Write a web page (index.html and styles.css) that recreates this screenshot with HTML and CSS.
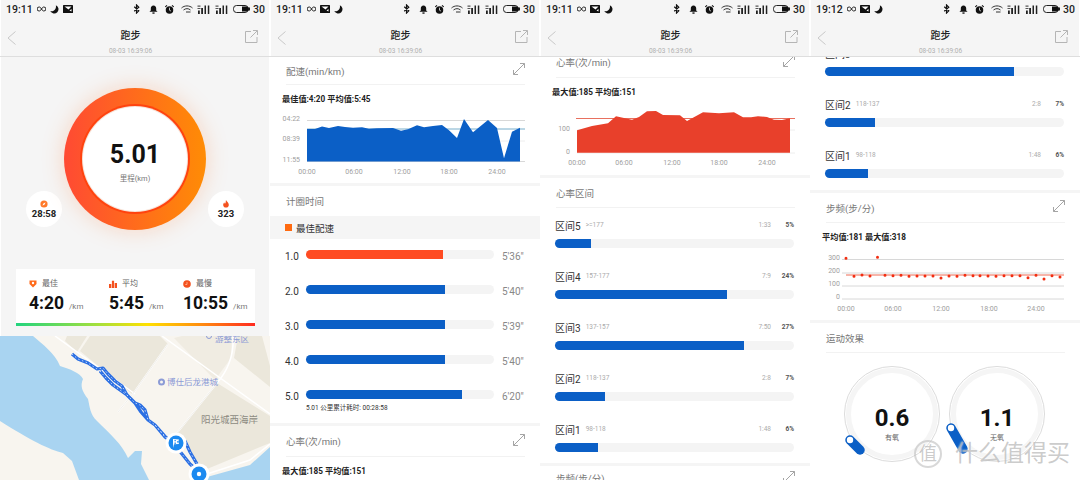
FILE: index.html
```html
<!DOCTYPE html>
<html lang="en">
<head>
<meta charset="UTF-8">
<meta name="viewport" content="width=device-width, initial-scale=1.0">
<link rel="stylesheet" href="styles.css">
<title>跑步</title>
</head>
<body>
<svg class="icon-defs" aria-hidden="true">
    <symbol id="i-inf" viewBox="0 0 10 6"><path d="M5 3C4 1 3 .8 2.3 .8a2.2 2.2 0 0 0 0 4.4C3 5.2 4 5 5 3s2-2.2 2.7-2.2a2.2 2.2 0 0 1 0 4.4C7 5.2 6 5 5 3z" fill="none" stroke="#222" stroke-width="1.1"/></symbol>
    <symbol id="i-moon" viewBox="0 0 10 10"><path d="M6.5 .3A4.8 4.8 0 1 1 .3 6.8C3.8 7.8 7.5 4.5 6.5 .3z" fill="#111"/></symbol>
    <symbol id="i-mail" viewBox="0 0 10 8"><rect width="10" height="8" rx=".6" fill="#111"/><path d="M1.5 1.5h7L5.5 4.5z" fill="#fff"/><path d="M6.5 5.500l2-1.500v2.500z" fill="#fff"/></symbol>
    <symbol id="i-bt" viewBox="0 0 7 11"><path d="M1 3l5 4.5L3.500 10V1L6 3.500 1 8" fill="none" stroke="#111" stroke-width="1.3"/></symbol>
    <symbol id="i-bell" viewBox="0 0 10 10"><path d="M5 .5c2 0 3 1.5 3 3.3V6l1.5 1.5h-9L2 6V3.800C2 2 3 .5 5 .5z" fill="#111"/><rect x="3.8" y="8.2" width="2.4" height="1.5" fill="#111"/></symbol>
    <symbol id="i-alarm" viewBox="0 0 10 10"><circle cx="5" cy="5.5" r="4.2" fill="#111"/><path d="M5 3v2.800l1.700 1" fill="none" stroke="#fff" stroke-width=".8"/><path d="M.3 2.200L2.200 .4M9.700 2.200L7.800 .4" stroke="#111" stroke-width="1.2"/></symbol>
    <symbol id="i-wifi" viewBox="0 0 12 8"><path d="M.5 3C3.500 .2 8.500 .2 11.500 3M2.500 5C4.500 3.200 7.500 3.200 9.500 5" fill="none" stroke="#333" stroke-width="1"/><path d="M5 7h4.500" stroke="#333" stroke-width="1"/></symbol>
    <symbol id="i-signal" viewBox="0 0 13 9"><path d="M.5 .5h3v1.200h-3zM.5 3h3v1h-3z" fill="#555"/><path d="M1 9V5.500h1.800V9zM4.200 9V3h1.800v6zM7.500 9V.5h1.500V9zM10.800 9V.5h1.500V9z" fill="#222"/></symbol>
    <symbol id="i-battery" viewBox="0 0 17 8"><rect x=".5" y=".5" width="14.5" height="7" rx="3" fill="none" stroke="#222"/><path d="M9 1.500h4.500a2 2 0 0 1 0 5H9z" fill="#111"/><rect x="15.5" y="2.5" width="1.5" height="3" fill="#222"/></symbol>
    <symbol id="i-back" viewBox="0 0 9 14"><path d="M8.500 .5L1 7l7.500 6.500" fill="none" stroke="#c8c8c8" stroke-width="1"/></symbol>
    <symbol id="i-share" viewBox="0 0 13 13"><path d="M6 1.500H.5v11h11.500V7" fill="none" stroke="#b5b5b5" stroke-width="1"/><path d="M5.500 7.500L12.300 .7M8 .5h4.500V5" fill="none" stroke="#b5b5b5" stroke-width="1"/></symbol>
    <symbol id="i-expand" viewBox="0 0 12 12"><path d="M.5 11.500L11.500 .5M7 .5h4.500V5M.5 7v4.500H5" fill="none" stroke="#a5a5a5" stroke-width="1"/></symbol>
</svg>

<div class="shots">

    <!-- overview -->
    <div class="screen">
        <div class="status-bar">
            <span class="status-time">19:11</span>
            <svg class="st-inf"><use href="#i-inf"/></svg>
            <svg class="st-moon"><use href="#i-moon"/></svg>
            <svg class="st-mail"><use href="#i-mail"/></svg>
            <div class="status-right">
                <svg class="st-bt"><use href="#i-bt"/></svg>
                <svg class="st-bell"><use href="#i-bell"/></svg>
                <svg class="st-alarm"><use href="#i-alarm"/></svg>
                <svg class="st-wifi"><use href="#i-wifi"/></svg>
                <svg class="st-signal"><use href="#i-signal"/></svg>
                <svg class="st-signal"><use href="#i-signal"/></svg>
                <svg class="st-battery"><use href="#i-battery"/></svg>
                <span class="status-level">30</span>
            </div>
        </div>
        <div class="nav-bar">
            <svg class="nav-back"><use href="#i-back"/></svg>
            <div class="nav-title">
                <div class="nav-name">跑步</div>
                <div class="nav-date">08-03 16:39:06</div>
            </div>
            <svg class="nav-share"><use href="#i-share"/></svg>
        </div>
        <div class="hero">
            <div class="hero-row">
                <div class="badge">
                    <svg class="badge-icon" viewBox="0 0 10 10"><circle cx="5" cy="5" r="4.5" fill="#ff7a2a"/><path d="M3 7l1.500-3L7 3 5.500 6z" fill="#fff"/></svg>
                    <span class="badge-value">28:58</span>
                </div>
                <div class="ring">
                    <div class="ring-core">
                        <div class="ring-value">5.01</div>
                        <div class="ring-label">里程(km)</div>
                    </div>
                </div>
                <div class="badge">
                    <svg class="badge-icon" viewBox="0 0 10 10"><path d="M5 0c.5 2 3.500 3 3.500 6a3.500 3.500 0 0 1-7 0c0-1.500.8-2.500 1.500-3 0 1 .5 1.500 1 1.500C5 3.500 4.500 1.500 5 0z" fill="#f4511e"/></svg>
                    <span class="badge-value">323</span>
                </div>
            </div>
            <div class="pace-card">
                <div class="pace-cols">
                    <div class="pace-col pace-best">
                        <div class="pace-label"><svg class="pace-icon" viewBox="0 0 8 8"><path d="M.5 .5h7v3.500L4 7.500.5 4z" fill="#ff6a1a"/><circle cx="4" cy="3" r="1.2" fill="#fff"/></svg>最佳</div>
                        <div class="pace-value">4:20<span class="pace-unit">/km</span></div>
                    </div>
                    <div class="pace-col pace-avg">
                        <div class="pace-label"><svg class="pace-icon" viewBox="0 0 8 8"><path d="M0 8V4h2.300v4zM2.900 8V.8h2.200V8zM5.700 8V3H8v5z" fill="#f4511e"/></svg>平均</div>
                        <div class="pace-value">5:45<span class="pace-unit">/km</span></div>
                    </div>
                    <div class="pace-col">
                        <div class="pace-label"><svg class="pace-icon" viewBox="0 0 8 8"><circle cx="4" cy="4" r="3.8" fill="#f4511e"/><path d="M4 2v2.500H2.300" fill="none" stroke="#ffc9a8" stroke-width=".7"/></svg>最慢</div>
                        <div class="pace-value">10:55<span class="pace-unit">/km</span></div>
                    </div>
                </div>
                <div class="pace-scale"></div>
            </div>
        </div>
        <svg class="map" viewBox="0 336 270 144">
            <rect x="0" y="336" width="270" height="144" fill="#f8f5ef"/>
            <path d="M67 336H87L77 352 65 341zM90 336H160L168 344 135 391 132 394 80 351z" fill="#ebe7db"/>
            <path d="M174 338L182 336H232L231 358 215 380z" fill="#f0ece2"/>
            <path d="M238 336H262L270 366V387L234 358z" fill="#ebe7db"/>
            <path d="M177 433L217 383 270 416V443L207 469 198 466 185 443z" fill="#ebe7db"/>
            <path d="M0 336H33C42 344 55 353 60 366 70 369 80 373 83 379 80 386 82 391 88 399 90 408 90 414 97 421 110 434 122 444 128 458L135 451H142L141 464 149 480H79L72 461 63 453C50 450 30 440 0 421z" fill="#a9d4f1"/>
            <path d="M206 480L207 477 250 465 270 447V480z" fill="#a9d4f1"/>
            <path d="M55 336L135 394M162 336L270 414M168 344L135 391 118 412" fill="none" stroke="#fff" stroke-width="1.5"/>
            <path d="M233 336C234 352 230 368 217 383L177 433M207 474L250 460 270 444" fill="none" stroke="#fff" stroke-width="1.5"/>
            <path d="M168 344L135 391 118 412M217 383L177 433" fill="none" stroke="#e6e3db" stroke-width=".6"/>
            <path class="route" d="M72 354L78 359 88 363 97 369 103 368 108 374 115 381 122 386 127 395 135 403 140 405 145 410 148 420 155 425 165 437 172 441M100 371L106 378 113 385 120 390 127 395M135 403L141 412 148 420M155 425L163 434 170 442M178 449L190 464 197 470M185 441L190 452 197 464"/>
            <path class="route-dash" d="M72 354L78 359 88 363 97 369 103 368 108 374 115 381 122 386 127 395 135 403 140 405 145 410 148 420 155 425 165 437 172 441M100 371L106 378 113 385 120 390 127 395M155 425L163 434 170 442M178 449L190 464 197 470M185 441L190 452 197 464"/>
            <circle cx="209" cy="336" r="2.5" fill="none" stroke="#8c9bd6"/>
            <text class="map-poi" x="215" y="342">游整东区</text>
            <circle cx="161.5" cy="382" r="3.5" fill="#8c9bd6"/>
            <circle cx="161.5" cy="382" r="1.5" fill="#f8f5ef"/>
            <text class="map-poi" x="167" y="385">博仕后龙港城</text>
            <text class="map-area" x="201" y="423">阳光城西海岸</text>
            <circle cx="176" cy="443" r="10.5" fill="#fff"/>
            <circle cx="176" cy="443" r="7.5" fill="#1c8af0"/>
            <path d="M173 448V439l6 .5-.8 2.200 .8 2.300-5 .2" fill="#fff"/>
            <path d="M174.500 440h1.300v1.300h-1.300zM177 441.300h1.200v1.300H177zM174.500 442.600h1.300v1.300h-1.300z" fill="#1c8af0"/>
            <circle cx="199" cy="474" r="10.5" fill="#fff"/>
            <circle cx="199" cy="474" r="7.5" fill="#1c8af0"/>
            <circle cx="199" cy="474" r="2.2" fill="#fff"/>
        </svg>
    </div>

    <!-- pace and laps -->
    <div class="screen">
        <div class="status-bar">
            <span class="status-time">19:11</span>
            <svg class="st-inf"><use href="#i-inf"/></svg>
            <svg class="st-mail"><use href="#i-mail"/></svg>
            <svg class="st-moon"><use href="#i-moon"/></svg>
            <div class="status-right">
                <svg class="st-bt"><use href="#i-bt"/></svg>
                <svg class="st-bell"><use href="#i-bell"/></svg>
                <svg class="st-alarm"><use href="#i-alarm"/></svg>
                <svg class="st-wifi"><use href="#i-wifi"/></svg>
                <svg class="st-signal"><use href="#i-signal"/></svg>
                <svg class="st-signal"><use href="#i-signal"/></svg>
                <svg class="st-battery"><use href="#i-battery"/></svg>
                <span class="status-level">30</span>
            </div>
        </div>
        <div class="nav-bar">
            <svg class="nav-back"><use href="#i-back"/></svg>
            <div class="nav-title">
                <div class="nav-name">跑步</div>
                <div class="nav-date">08-03 16:39:06</div>
            </div>
            <svg class="nav-share"><use href="#i-share"/></svg>
        </div>
        <div class="scroll">
            <div class="section-head section-head-short">
                <span>配速(min/km)</span>
                <svg class="expand"><use href="#i-expand"/></svg>
            </div>
            <div class="stat-line">最佳值:4:20 平均值:5:45</div>
            <svg class="chart chart-pace" viewBox="0 110 270 72">
                <path class="grid-line" d="M37 119.5H255M37 160.5H255"/>
                <path class="grid-soft" d="M37 140H255"/>
                <path d="M37 128H255" stroke="#79aecb" stroke-width="1" fill="none"/>
                <path d="M37 128H45L52 125.5 59 127 68 125 75 126 83 126.7 92 126.3 99 127.7 107 127.3 123 127 131 129.7 138 128.3 147 124.3 154 126.3 163 125 172 124 179 129.3 187 137 194 118 203 131.3 218 119 227 127 234 157.3 242 130.7 250 126.7V160.5H37z" fill="#0b5fc6"/>
                <text class="axis-y" x="30" y="119.5">04:22</text>
                <text class="axis-y" x="30" y="140">08:39</text>
                <text class="axis-y" x="30" y="161">11:55</text>
                <text class="axis-x" x="37" y="172.5">00:00</text>
                <text class="axis-x" x="84" y="172.5">06:00</text>
                <text class="axis-x" x="132" y="172.5">12:00</text>
                <text class="axis-x" x="179" y="172.5">18:00</text>
                <text class="axis-x" x="227" y="172.5">24:00</text>
            </svg>
            <div class="divider"></div>
            <div class="section-plain">计圈时间</div>
            <div class="lap-band"><span class="lap-mark"></span>最佳配速</div>
            <div class="laps">
                <div class="lap-row">
                    <span class="lap-no">1.0</span>
                    <div class="track"><div class="fill fill-best" style="width: 73%"></div></div>
                    <span class="lap-time">5'36"</span>
                </div>
                <div class="lap-row">
                    <span class="lap-no">2.0</span>
                    <div class="track"><div class="fill" style="width: 74%"></div></div>
                    <span class="lap-time">5'40"</span>
                </div>
                <div class="lap-row">
                    <span class="lap-no">3.0</span>
                    <div class="track"><div class="fill" style="width: 74%"></div></div>
                    <span class="lap-time">5'39"</span>
                </div>
                <div class="lap-row">
                    <span class="lap-no">4.0</span>
                    <div class="track"><div class="fill" style="width: 74%"></div></div>
                    <span class="lap-time">5'40"</span>
                </div>
                <div class="lap-row">
                    <span class="lap-no">5.0</span>
                    <div class="track"><div class="fill" style="width: 83%"></div></div>
                    <span class="lap-time">6'20"</span>
                </div>
            </div>
            <div class="lap-note">5.01 公里累计耗时: 00:28:58</div>
            <div class="divider"></div>
            <div class="section-head">
                <span>心率(次/min)</span>
                <svg class="expand"><use href="#i-expand"/></svg>
            </div>
            <div class="stat-line">最大值:185 平均值:151</div>
        </div>
    </div>

    <!-- heart rate -->
    <div class="screen">
        <div class="status-bar">
            <span class="status-time">19:11</span>
            <svg class="st-inf"><use href="#i-inf"/></svg>
            <svg class="st-mail"><use href="#i-mail"/></svg>
            <svg class="st-moon"><use href="#i-moon"/></svg>
            <div class="status-right">
                <svg class="st-bt"><use href="#i-bt"/></svg>
                <svg class="st-bell"><use href="#i-bell"/></svg>
                <svg class="st-alarm"><use href="#i-alarm"/></svg>
                <svg class="st-wifi"><use href="#i-wifi"/></svg>
                <svg class="st-signal"><use href="#i-signal"/></svg>
                <svg class="st-signal"><use href="#i-signal"/></svg>
                <svg class="st-battery"><use href="#i-battery"/></svg>
                <span class="status-level">30</span>
            </div>
        </div>
        <div class="nav-bar">
            <svg class="nav-back"><use href="#i-back"/></svg>
            <div class="nav-title">
                <div class="nav-name">跑步</div>
                <div class="nav-date">08-03 16:39:06</div>
            </div>
            <svg class="nav-share"><use href="#i-share"/></svg>
        </div>
        <div class="scroll">
            <div class="section-head section-head-cut">
                <span>心率(次/min)</span>
                <svg class="expand"><use href="#i-expand"/></svg>
            </div>
            <div class="stat-line">最大值:185 平均值:151</div>
            <svg class="chart chart-heart" viewBox="0 104 270 71">
                <path class="grid-soft" d="M37 130H255M37 153H255"/>
                <path d="M36 118.5H255" stroke="#e8705f" stroke-width="1" fill="none"/>
                <path d="M37 130.3L52 126 68 123.3 76 116.3 92 119.7 99 117 107 111.3 116 111 123 115 140 115.3 147 121 163 112.3 179 113.3 194 112.3 203 117.3 211 117.3 218 116.3 227 117 234 119.7 242 120 250 118.3V152.7H37z" fill="#e8402b"/>
                <text class="axis-y" x="30" y="131">100</text>
                <text class="axis-y" x="30" y="153.5">0</text>
                <text class="axis-x" x="37" y="165">00:00</text>
                <text class="axis-x" x="84" y="165">06:00</text>
                <text class="axis-x" x="132" y="165">12:00</text>
                <text class="axis-x" x="179" y="165">18:00</text>
                <text class="axis-x" x="227" y="165">24:00</text>
            </svg>
            <div class="divider"></div>
            <div class="section-head section-head-text">心率区间</div>
            <div class="zones">
                <div class="zone">
                    <div class="zone-top"><span class="zone-name">区间5</span><span class="zone-range">&gt;=177</span><span class="zone-time">1:33</span><span class="zone-pct">5%</span></div>
                    <div class="track"><div class="fill" style="width: 15%"></div></div>
                </div>
                <div class="zone">
                    <div class="zone-top"><span class="zone-name">区间4</span><span class="zone-range">157-177</span><span class="zone-time">7:9</span><span class="zone-pct">24%</span></div>
                    <div class="track"><div class="fill" style="width: 72%"></div></div>
                </div>
                <div class="zone">
                    <div class="zone-top"><span class="zone-name">区间3</span><span class="zone-range">137-157</span><span class="zone-time">7:50</span><span class="zone-pct">27%</span></div>
                    <div class="track"><div class="fill" style="width: 79%"></div></div>
                </div>
                <div class="zone">
                    <div class="zone-top"><span class="zone-name">区间2</span><span class="zone-range">118-137</span><span class="zone-time">2:8</span><span class="zone-pct">7%</span></div>
                    <div class="track"><div class="fill" style="width: 21%"></div></div>
                </div>
                <div class="zone">
                    <div class="zone-top"><span class="zone-name">区间1</span><span class="zone-range">98-118</span><span class="zone-time">1:48</span><span class="zone-pct">6%</span></div>
                    <div class="track"><div class="fill" style="width: 18%"></div></div>
                </div>
            </div>
            <div class="divider"></div>
            <div class="section-head section-head-peek">
                <span>步频(步/分)</span>
                <svg class="expand"><use href="#i-expand"/></svg>
            </div>
        </div>
    </div>

    <!-- cadence and effect -->
    <div class="screen">
        <div class="status-bar">
            <span class="status-time">19:12</span>
            <svg class="st-inf"><use href="#i-inf"/></svg>
            <svg class="st-mail"><use href="#i-mail"/></svg>
            <svg class="st-moon"><use href="#i-moon"/></svg>
            <div class="status-right">
                <svg class="st-bt"><use href="#i-bt"/></svg>
                <svg class="st-bell"><use href="#i-bell"/></svg>
                <svg class="st-alarm"><use href="#i-alarm"/></svg>
                <svg class="st-wifi"><use href="#i-wifi"/></svg>
                <svg class="st-signal"><use href="#i-signal"/></svg>
                <svg class="st-signal"><use href="#i-signal"/></svg>
                <svg class="st-battery"><use href="#i-battery"/></svg>
                <span class="status-level">30</span>
            </div>
        </div>
        <div class="nav-bar">
            <svg class="nav-back"><use href="#i-back"/></svg>
            <div class="nav-title">
                <div class="nav-name">跑步</div>
                <div class="nav-date">08-03 16:39:06</div>
            </div>
            <svg class="nav-share"><use href="#i-share"/></svg>
        </div>
        <div class="scroll">
            <div class="zones zones-cut">
                <div class="zone">
                    <div class="zone-top"><span class="zone-name">区间3</span><span class="zone-range">137-157</span><span class="zone-time">7:50</span><span class="zone-pct">27%</span></div>
                    <div class="track"><div class="fill" style="width: 79%"></div></div>
                </div>
                <div class="zone">
                    <div class="zone-top"><span class="zone-name">区间2</span><span class="zone-range">118-137</span><span class="zone-time">2:8</span><span class="zone-pct">7%</span></div>
                    <div class="track"><div class="fill" style="width: 21%"></div></div>
                </div>
                <div class="zone">
                    <div class="zone-top"><span class="zone-name">区间1</span><span class="zone-range">98-118</span><span class="zone-time">1:48</span><span class="zone-pct">6%</span></div>
                    <div class="track"><div class="fill" style="width: 18%"></div></div>
                </div>
            </div>
            <div class="divider"></div>
            <div class="section-head section-head-step">
                <span>步频(步/分)</span>
                <svg class="expand"><use href="#i-expand"/></svg>
            </div>
            <div class="stat-line">平均值:181 最大值:318</div>
            <svg class="chart chart-step" viewBox="0 249 270 71">
                <path class="grid-line" d="M32 259.5H254M32 273H254M32 286H254M32 299H254"/>
                <path d="M36 275H254" stroke="#ee6a55" stroke-width="1" fill="none"/>
                <path class="step-dots" d="M36 258.3h0M44 276.3h0M52 275h0M60 276h0M67.5 257.3h0M75 275.3h0M83 275.7h0M91 275.3h0M99 276.3h0M107 276h0M115 276h0M123 276h0M131 278h0M139 276h0M147 276.3h0M155 275.3h0M163 275.7h0M170 275.7h0M178 276h0M186 276.3h0M194 275.7h0M202 275.7h0M210 275.7h0M218 277.7h0M226 275.3h0M234 279h0M242 275.7h0M250 277h0"/>
                <text class="axis-y" x="30" y="259.5">300</text>
                <text class="axis-y" x="30" y="273">200</text>
                <text class="axis-y" x="30" y="286">100</text>
                <text class="axis-y" x="30" y="299">0</text>
                <text class="axis-x" x="36" y="310.5">00:00</text>
                <text class="axis-x" x="83" y="310.5">06:00</text>
                <text class="axis-x" x="131" y="310.5">12:00</text>
                <text class="axis-x" x="179" y="310.5">18:00</text>
                <text class="axis-x" x="226" y="310.5">24:00</text>
            </svg>
            <div class="divider"></div>
            <div class="section-head section-head-text">运动效果</div>
            <div class="gauges">
                <div class="gauge">
                    <svg class="gauge-dial" viewBox="0 0 96 96">
                        <circle cx="48" cy="47" r="47.5" fill="#fff" stroke="#dcdcdc"/>
                        <circle cx="48" cy="47" r="43.5" fill="none" stroke="#f5f5f5" stroke-width="5"/>
                        <path d="M6 73L16 83" stroke="#0b5fc6" stroke-width="9.5" stroke-linecap="round"/>
                        <circle cx="6" cy="73" r="3.2" fill="#fff"/>
                    </svg>
                    <div class="gauge-value">0.6</div>
                    <div class="gauge-label">有氧</div>
                </div>
                <div class="gauge">
                    <svg class="gauge-dial" viewBox="0 0 96 96">
                        <circle cx="48" cy="47" r="47.5" fill="#fff" stroke="#dcdcdc"/>
                        <circle cx="48" cy="47" r="43.5" fill="none" stroke="#f5f5f5" stroke-width="5"/>
                        <path d="M2 61L14 82" stroke="#0b5fc6" stroke-width="9.5" stroke-linecap="round"/>
                        <circle cx="2" cy="61" r="3.2" fill="#fff"/>
                    </svg>
                    <div class="gauge-value">1.1</div>
                    <div class="gauge-label">无氧</div>
                </div>
            </div>
        </div>
        <div class="watermark"><span class="watermark-seal">值</span><span class="watermark-name">什么值得买</span></div>
    </div>

</div>
</body>
</html>
```

FILE: styles.css
```css
* {
    box-sizing: border-box;
}

html,
body {
    margin: 0;
    padding: 0;
    height: 480px;
    overflow: hidden;
    background-color: #ffffff;
    font-family: Roboto, "Noto Sans CJK SC", sans-serif;
    color: #222;
}

.icon-defs {
    position: absolute;
    width: 0;
    height: 0;
}

.shots {
    display: grid;
    grid-template-columns: repeat(4, 270px);
    height: 480px;
}

.screen {
    position: relative;
    display: flex;
    flex-direction: column;
    height: 480px;
    overflow: hidden;
    background-color: #f5f5f5;
    box-shadow: inset 1px 0 #fff, inset -1px 0 #fff;
}

/* status bar */
.status-bar {
    display: flex;
    align-items: center;
    height: 18px;
    padding: 0 5px 0 6px;
    flex: none;
}

.status-time {
    font-size: 10.5px;
    font-weight: 500;
    width: 31px;
}

.status-bar svg {
    display: block;
    flex: none;
}

.st-inf {
    width: 9px;
    height: 6px;
    margin-right: 4px;
}

.st-moon {
    width: 9px;
    height: 9px;
    margin-right: 4px;
}

.st-mail {
    width: 10px;
    height: 8px;
    margin-right: 4px;
}

.status-right {
    display: flex;
    align-items: center;
    margin-left: auto;
}

.st-bt {
    width: 7px;
    height: 10px;
    margin-right: 9px;
}

.st-bell {
    width: 9px;
    height: 9px;
    margin-right: 7px;
}

.st-alarm {
    width: 9px;
    height: 9px;
    margin-right: 7px;
}

.st-wifi {
    width: 12px;
    height: 8px;
    margin-right: 4px;
}

.st-signal {
    width: 13px;
    height: 9px;
    margin-right: 5px;
}

.st-battery {
    width: 17px;
    height: 8px;
    margin-right: 3px;
}

.status-level {
    font-size: 10.5px;
    font-weight: 500;
}

/* title bar */
.nav-bar {
    display: flex;
    align-items: flex-start;
    justify-content: space-between;
    height: 39px;
    padding: 10px 12px 0 7px;
    border-bottom: 1px solid #dedede;
    flex: none;
}

.nav-back {
    width: 9px;
    height: 14px;
    margin-top: 3px;
}

.nav-share {
    width: 13px;
    height: 13px;
    margin-top: 2px;
}

.nav-title {
    text-align: center;
}

.nav-name {
    font-size: 10px;
    line-height: 16px;
    font-weight: 500;
}

.nav-date {
    font-size: 6.5px;
    line-height: 8px;
    margin-top: 3px;
    color: #b0b0b0;
}

/* first screen */
.hero {
    display: flex;
    flex-direction: column;
    height: 279px;
    padding-top: 31px;
    flex: none;
}

.hero-row {
    display: flex;
    justify-content: center;
    align-items: flex-end;
    gap: 2px;
}

.badge {
    display: flex;
    flex-direction: column;
    align-items: center;
    justify-content: center;
    width: 36px;
    height: 36px;
    margin-bottom: 3px;
    border-radius: 50%;
    background-color: #fff;
}

.badge-icon {
    width: 8px;
    height: 8px;
}

.badge-value {
    font-size: 9.5px;
    line-height: 11px;
    font-weight: 700;
}

.ring {
    display: flex;
    align-items: center;
    justify-content: center;
    width: 142px;
    height: 142px;
    border-radius: 50%;
    background: linear-gradient(90deg, #ff4a33, #ff8c05);
    box-shadow: 0 0 22px rgba(255, 130, 60, 0.28);
}

.ring-core {
    display: flex;
    flex-direction: column;
    align-items: center;
    width: 104px;
    height: 104px;
    padding-top: 34px;
    border-radius: 50%;
    background-color: #fff;
    box-shadow: 0 0 0 1px #f6e3d8, 0 0 0 3px #ff430f;
}

.ring-value {
    font-size: 25px;
    line-height: 28px;
    font-weight: 700;
    color: #111;
}

.ring-label {
    font-size: 7.5px;
    line-height: 10px;
    margin-top: 5px;
    color: #777;
}

.pace-card {
    display: flex;
    flex-direction: column;
    justify-content: space-between;
    width: 239px;
    height: 57px;
    margin: 39px 0 0 16px;
    background-color: #fff;
}

.pace-cols {
    display: flex;
    padding: 9px 0 0 13px;
}

.pace-col {
    flex: none;
}

.pace-best {
    width: 80px;
}

.pace-avg {
    width: 74px;
}

.pace-label {
    display: flex;
    align-items: center;
    font-size: 8px;
    line-height: 12px;
    color: #666;
}

.pace-icon {
    width: 8px;
    height: 8px;
    margin-right: 5px;
}

.pace-value {
    font-size: 17.5px;
    line-height: 20px;
    margin-top: 3px;
    font-weight: 700;
    color: #111;
}

.pace-unit {
    font-size: 8px;
    font-weight: 400;
    margin-left: 5px;
    color: #777;
}

.pace-scale {
    height: 3px;
    background: linear-gradient(90deg, #22d47e, #a8e03a 35%, #ffe000 55%, #ff8a10 78%, #ff2a20);
}

.map {
    display: block;
    width: 270px;
    height: 144px;
    flex: none;
}

.route {
    fill: none;
    stroke: #2b6fe3;
    stroke-width: 3.2;
    stroke-linejoin: round;
}

.route-dash {
    fill: none;
    stroke: #cfe0fb;
    stroke-width: 0.9;
    stroke-dasharray: 1.5 2.5;
}

.map-poi {
    font-size: 8.5px;
    fill: #8c9bd6;
}

.map-area {
    font-size: 9.5px;
    fill: #8d8b82;
}

/* scrolled content */
.scroll {
    flex: 1;
    min-height: 0;
    overflow: hidden;
    background-color: #fff;
}

.divider {
    height: 3px;
    background-color: #f5f5f5;
}

.section-head {
    display: flex;
    align-items: center;
    justify-content: space-between;
    height: 31px;
    margin: 0 15px 0 16px;
    border-bottom: 1px solid #f2f2f2;
    font-size: 9.5px;
    color: #777;
}

.section-head-short {
    height: 28px;
}

.section-head-cut {
    margin-top: -10px;
}

.section-head-text,
.section-head-step {
    height: 30px;
}

.section-head-peek {
    height: 24px;
    border-bottom: 0;
}

.expand {
    display: block;
    width: 12px;
    height: 12px;
    margin-top: -3px;
}

.section-plain {
    display: flex;
    align-items: center;
    height: 30px;
    padding-left: 16px;
    font-size: 9.5px;
    color: #777;
}

.stat-line {
    display: flex;
    align-items: center;
    height: 26px;
    padding-left: 12px;
    font-size: 8.2px;
    font-weight: 700;
    color: #222;
}

.chart {
    display: block;
    width: 270px;
}

.chart-pace {
    height: 72px;
}

.chart-heart,
.chart-step {
    height: 71px;
}

.grid-line {
    fill: none;
    stroke: #d8d8d8;
    stroke-width: 1;
}

.grid-soft {
    fill: none;
    stroke: #eeeeee;
    stroke-width: 1;
}

.step-dots {
    fill: none;
    stroke: #f22d10;
    stroke-width: 3;
    stroke-linecap: round;
}

.axis-y,
.axis-x {
    font-size: 7px;
    fill: #a0a0a0;
}

.axis-y {
    text-anchor: end;
}

.axis-x {
    text-anchor: middle;
}

/* laps */
.lap-band {
    display: flex;
    align-items: center;
    height: 23px;
    padding-left: 15px;
    background-color: #f5f5f5;
    font-size: 9.5px;
    color: #333;
}

.lap-mark {
    width: 7px;
    height: 7px;
    margin-right: 4px;
    background-color: #ff6a10;
}

.laps {
    display: flex;
    flex-direction: column;
    gap: 17px;
    padding-top: 7px;
}

.lap-row {
    display: grid;
    grid-template-columns: 21px 188px auto;
    align-items: center;
    height: 18px;
    padding-left: 15px;
}

.lap-no {
    font-size: 10px;
    color: #333;
    padding-top: 2px;
}

.lap-row .track {
    margin-top: -1px;
}

.lap-time {
    margin-left: 8px;
    font-size: 10px;
    color: #888;
    padding-top: 2px;
}

.lap-note {
    height: 19px;
    padding-left: 36px;
    font-size: 6.5px;
    line-height: 9px;
    color: #333;
}

.track {
    height: 9px;
    border-radius: 5px;
    background-color: #f4f4f4;
}

.fill {
    height: 100%;
    border-radius: 5px 0 0 5px;
    background-color: #0b5fc6;
}

.fill-best {
    background-color: #ff4b22;
}

/* heart rate zones */
.zones {
    display: flex;
    flex-direction: column;
    gap: 19px;
    padding: 8px 16px 11px 15px;
}

.zones-cut {
    margin-top: -21px;
    padding-bottom: 12px;
}

.zone-top {
    display: flex;
    align-items: center;
    height: 20px;
    padding-bottom: 2px;
    margin-bottom: 3px;
}

.zone-name {
    font-size: 10px;
    color: #333;
}

.zone-range {
    margin-left: 5px;
    font-size: 6.5px;
    color: #aaa;
}

.zone-time {
    margin-left: auto;
    font-size: 6.5px;
    color: #aaa;
}

.zone-pct {
    width: 23px;
    text-align: right;
    font-size: 6.5px;
    font-weight: 700;
    color: #555;
}

/* effect gauges */
.gauges {
    display: flex;
    gap: 9px;
    padding: 14px 0 0 34px;
}

.gauge {
    position: relative;
    display: flex;
    flex-direction: column;
    align-items: center;
    width: 96px;
    height: 96px;
    padding-top: 38px;
}

.gauge-dial {
    position: absolute;
    top: 0;
    left: 0;
    width: 96px;
    height: 96px;
    overflow: visible;
}

.gauge-value,
.gauge-label {
    position: relative;
}

.gauge-value {
    font-size: 24px;
    line-height: 26px;
    font-weight: 700;
    color: #111;
}

.gauge-label {
    font-size: 7px;
    line-height: 9px;
    margin-top: 3px;
    color: #666;
}

.watermark {
    position: absolute;
    left: 104px;
    bottom: 12px;
    display: flex;
    align-items: center;
    color: rgba(170, 170, 170, 0.62);
    text-shadow: 0 0 2px rgba(255, 255, 255, 0.9);
}

.watermark-seal {
    display: flex;
    align-items: center;
    justify-content: center;
    width: 28px;
    height: 28px;
    margin-right: 13px;
    border: 2px solid rgba(190, 190, 190, 0.6);
    border-radius: 50%;
    font-size: 18px;
    line-height: 1;
}

.watermark-name {
    font-size: 23px;
    line-height: 28px;
    white-space: nowrap;
}
```
